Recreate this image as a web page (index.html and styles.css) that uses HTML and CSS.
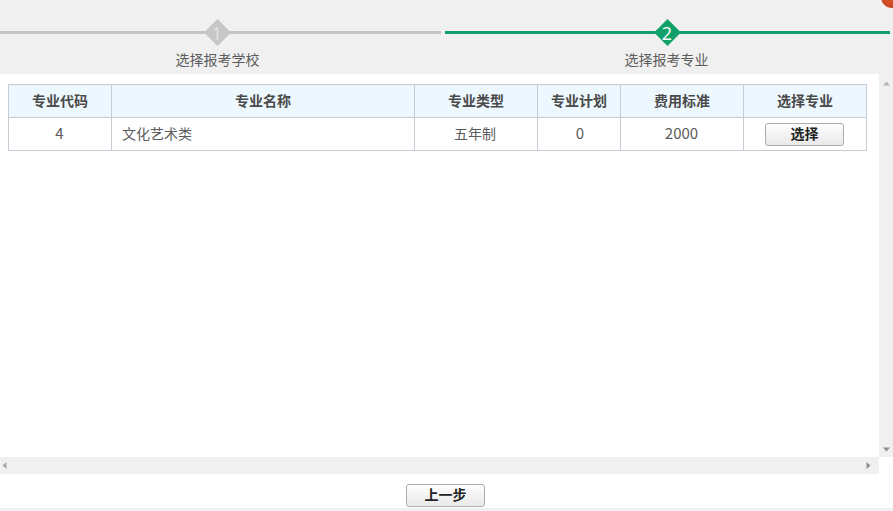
FILE: index.html
```html
<!DOCTYPE html>
<html lang="zh">
<head>
<meta charset="utf-8">
<title>选择报考专业</title>
<link rel="stylesheet" href="styles.css">
</head>
<body>
<div class="dialog">
  <span class="close-badge"></span>
  <header class="steps">
    <div class="step">
      <div class="track"><span class="diamond"><b class="num">1</b></span></div>
      <div class="step-label">选择报考学校</div>
    </div>
    <div class="step active">
      <div class="track"><span class="diamond"><b class="num">2</b></span></div>
      <div class="step-label">选择报考专业</div>
    </div>
  </header>
  <div class="viewport">
    <div class="scroll-row">
      <main class="content">
        <table class="majors">
          <colgroup>
            <col class="c1"><col class="c2"><col class="c3"><col class="c4"><col class="c5"><col class="c6">
          </colgroup>
          <thead>
            <tr><th>专业代码</th><th>专业名称</th><th>专业类型</th><th>专业计划</th><th>费用标准</th><th>选择专业</th></tr>
          </thead>
          <tbody>
            <tr>
              <td class="digits">4</td>
              <td class="left">文化艺术类</td>
              <td class="kind">五年制</td>
              <td class="digits plan">0</td>
              <td class="digits">2000</td>
              <td class="pick"><button class="btn btn-pick" type="button">选择</button></td>
            </tr>
          </tbody>
        </table>
      </main>
      <div class="vbar">
        <svg class="arrow" width="9" height="5" viewBox="0 0 9 5"><path d="M4.5 0.5L8 4.5H1z" fill="#b4b4b4"/></svg>
        <svg class="arrow" width="9" height="5" viewBox="0 0 9 5"><path d="M4.5 4.5L8 0.5H1z" fill="#8f8f8f"/></svg>
      </div>
    </div>
    <div class="hbar-row">
      <div class="hbar">
        <svg width="5" height="9" viewBox="0 0 5 9"><path d="M0.5 4.5L4.5 1V8z" fill="#a8a8a8"/></svg>
        <svg width="5" height="9" viewBox="0 0 5 9"><path d="M4.5 4.5L0.5 1V8z" fill="#8f8f8f"/></svg>
      </div>
    </div>
  </div>
  <footer class="actions">
    <button class="btn btn-prev" type="button">上一步</button>
  </footer>
  <div class="bottom-strip"></div>
</div>
</body>
</html>
```

FILE: styles.css
```css
* { box-sizing: border-box; }
html, body { margin: 0; padding: 0; height: 100%; overflow: hidden; background: #fff; }
body { font-family: "Noto Sans CJK SC", "Liberation Sans", sans-serif; font-size: 14px; color: #555; }

.dialog { position: relative; width: 893px; height: 511px; display: flex; flex-direction: column; overflow: hidden; }

.close-badge { position: absolute; top: -14px; right: -10px; width: 22px; height: 22px; border-radius: 50%; background: radial-gradient(circle at 40% 60%, #d9562a, #b8321c); }

.steps { height: 74px; background: #f0f0f0; display: flex; gap: 4px; padding-top: 19px; padding-right: 3px; flex: none; }
.step { width: 441px; }
.step + .step { width: 445px; }
.track { height: 3px; margin-top: 12px; background: #c4c4c4; display: flex; justify-content: center; align-items: center; }
.step.active .track { background: #12a06a; }
.diamond { width: 19px; height: 19px; background: #c6c6c6; transform: rotate(45deg); display: flex; align-items: center; justify-content: center; flex: none; margin-left: -6px; }
.step.active .diamond { background: #12a06a; margin-left: 0; }
.num { transform: rotate(-45deg); font-family: "Open Sans", "Liberation Sans", sans-serif; font-weight: 400; font-size: 18px; line-height: 1; color: #e4e4e4; }
.step.active .num { color: #fff; }
.step-label { margin-top: 15px; text-align: center; line-height: 20px; color: #5c5c5c; font-size: 14px; margin-left: -6px; }
.step.active .step-label { margin-left: -2px; }

.viewport { flex: none; }
.scroll-row { display: flex; height: 383px; }
.content { width: 879px; padding: 10px 12px 0 8px; background: #fff; }
.vbar { width: 14px; background: #f0f0f0; display: flex; flex-direction: column; justify-content: space-between; align-items: center; padding: 7px 0 5px; }
.arrow { display: block; }

.hbar-row { height: 17px; display: flex; }
.hbar { width: 879px; background: #f0f0f0; display: flex; justify-content: space-between; align-items: center; padding: 0 8px 0 2px; }

.majors { border-collapse: collapse; table-layout: fixed; width: 858px; color: #5c5c5c; }
.c1 { width: 103px; } .c2 { width: 303px; } .c3 { width: 123px; }
.c4 { width: 83px; } .c5 { width: 123px; } .c6 { width: 123px; }
.majors th, .majors td { border: 1px solid #c5ccd6; height: 33px; padding: 0 0 3px; text-align: center; vertical-align: middle; font-size: 14px; }
.majors th { background: #edf7fe; font-weight: 700; color: #4a4a4a; }
.majors td.left { text-align: left; padding-left: 10px; }
.majors td.kind { padding-right: 2px; }
.majors td.digits { font-size: 15px; padding-right: 1px; }
.majors td.plan { padding-right: 0; padding-left: 2px; }
.majors td.pick { padding: 0 1px 0 0; }

.btn { font-family: inherit; font-weight: 700; color: #222; border: 1px solid #adadad; border-radius: 3px; background: linear-gradient(#fdfdfd, #e9e9e9); padding: 0 0 2px; display: inline-block; vertical-align: middle; }
.btn-pick { width: 79px; height: 23px; font-size: 14px; line-height: 19px; }
.btn-prev { width: 79px; height: 23px; font-size: 14px; line-height: 19px; }

.actions { height: 34px; background: #fff; display: flex; justify-content: center; align-items: flex-start; padding-top: 10px; flex: none; padding-right: 2px; }
.bottom-strip { height: 3px; background: #f0f0f0; flex: none; }
```
